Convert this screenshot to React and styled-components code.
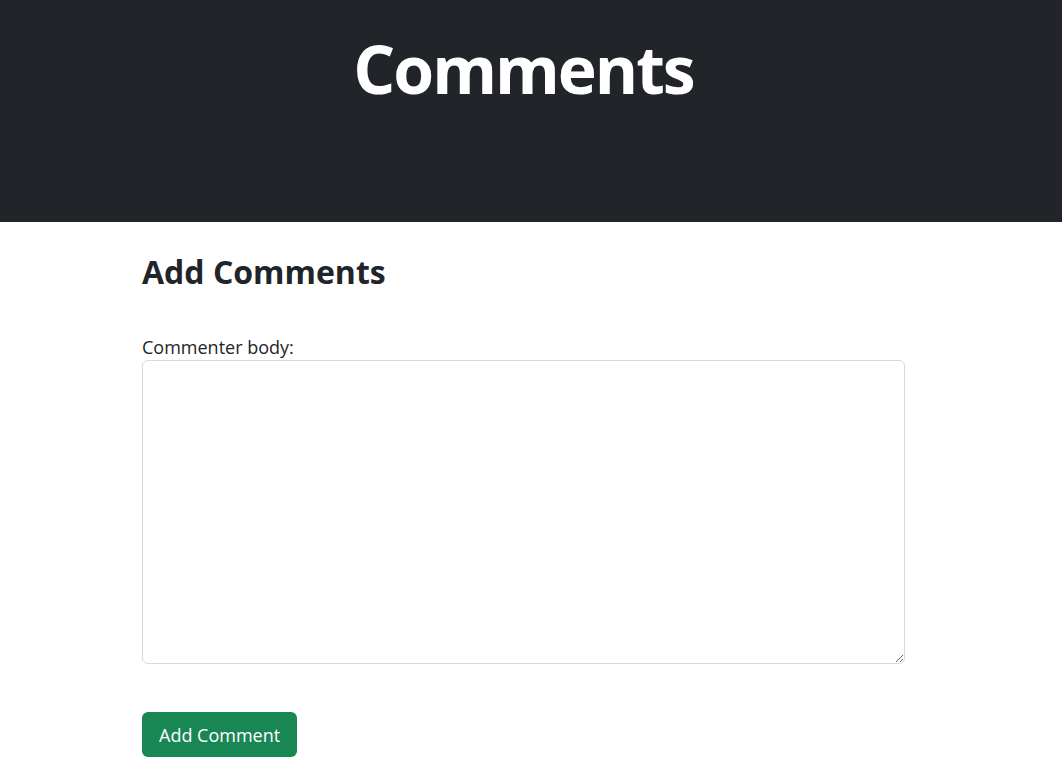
import { styled, createGlobalStyle } from 'styled-components'

const GlobalStyle = createGlobalStyle`
  * {
    box-sizing: border-box;
  }
  body {
    margin: 0;
    font-family: "Open Sans", "Noto Sans", sans-serif;
    color: #212529;
    background: #fff;
  }
`

const Header = styled.header`
  height: 222px;
  background: #212529;
  padding-top: 29px;
`

const Container = styled.div`
  width: 763px;
  margin-left: 142px;
  display: flex;
  flex-direction: column;
`

const PageTitle = styled.h1`
  margin: 0;
  width: 100%;
  text-align: center;
  font-size: 66px;
  font-weight: 700;
  line-height: 1.2;
  color: #fff;
  letter-spacing: -2px;
`

const Main = styled(Container)`
  padding-top: 31px;
`

const SectionTitle = styled.h2`
  margin: 0 0 44px;
  font-size: 32px;
  font-weight: 700;
  line-height: 1.2;
`

const Label = styled.label`
  font-size: 18px;
  line-height: 25px;
`

const TextArea = styled.textarea`
  display: block;
  width: 100%;
  height: 304px;
  margin: 0 0 48px;
  padding: 6px 12px;
  font-family: inherit;
  font-size: 16px;
  border: 1px solid #d6d9dc;
  border-radius: 6px;
  resize: vertical;
  outline: none;
`

const Button = styled.button`
  align-self: flex-start;
  height: 45px;
  padding: 0 17px;
  border: none;
  border-radius: 6px;
  background: #198754;
  color: #fff;
  font-family: inherit;
  font-size: 18px;
  cursor: pointer;
`

export default function App() {
  return (
    <>
      <GlobalStyle />
      <Header>
        <Container>
          <PageTitle>Comments</PageTitle>
        </Container>
      </Header>
      <Main>
        <SectionTitle>Add Comments</SectionTitle>
        <Label htmlFor="body">Commenter body:</Label>
        <TextArea id="body" />
        <Button>Add Comment</Button>
      </Main>
    </>
  )
}
